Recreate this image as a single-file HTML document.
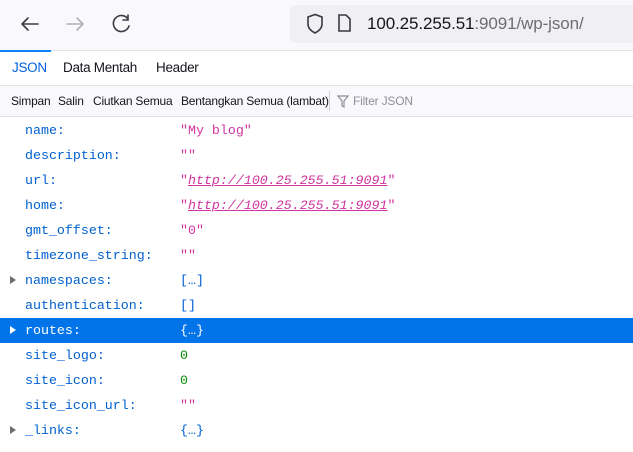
<!DOCTYPE html>
<html><head><style>
body{margin:0;width:633px;height:452px;overflow:hidden;background:#fff;font-family:"Liberation Sans",sans-serif;position:relative}
.top{position:absolute;left:0;top:0;width:633px;height:50px;background:#f9f9fb;border-bottom:1px solid #e0e0e6}
.addr{position:absolute;left:290px;top:5px;width:360px;height:38px;background:#f0f0f4;border-radius:6px}
.url{position:absolute;left:367px;top:14px;font-size:17px;color:#15141a;letter-spacing:-0.1px}
.url span{color:#6d6d72}
.tabs{position:absolute;top:51px;left:0;width:633px;height:34px;border-bottom:1px solid #e0e0e6}
.tab{position:absolute;top:9px;font-size:13.5px;letter-spacing:-0.3px;color:#15141a}
.bar{position:absolute;top:86px;left:0;width:633px;height:30px;background:#f9f9fb;border-bottom:1px solid #e0e0e6;font-size:12px;letter-spacing:-0.2px;color:#15141a}
.bar span{position:absolute;top:8px}
.row{position:absolute;left:0;width:633px;height:25px;font-family:"Liberation Mono",monospace;font-size:13.3px;line-height:25px}
.k{position:absolute;left:25px;color:#0060d0}
.v{position:absolute;left:180px}
.s{color:#d1349e}.n{color:#058b00}.o{color:#0060d0}
.tri{position:absolute;left:10px;top:8px;width:0;height:0;border-left:6px solid #6d6d72;border-top:4.5px solid transparent;border-bottom:4.5px solid transparent}
.sel{background:#0074e8}.sel .k,.sel .v{color:#fff}.sel .tri{border-left-color:#fff}
a{color:#d1349e;font-style:italic;text-decoration:underline}
</style></head><body>
<div class="top">
<svg width="633" height="50" style="position:absolute;left:0;top:0" fill="none" stroke-width="1.6" stroke-linecap="round">
<path d="M22 24h16M22 24l6-6M22 24l6 6" stroke="#3a3944"/>
<path d="M67 24h16M83 24l-6-6M83 24l-6 6" stroke="#b0b0b6"/>
<path d="M128 19a8 8 0 1 0 1 7M128 15v5h-5" stroke="#3a3944"/>
</svg>
<div class="addr"></div>
<svg width="633" height="50" style="position:absolute;left:0;top:0" fill="none" stroke="#3a3944" stroke-width="1.6">
<path d="M308 17l7-2.5 7 2.5v7c0 4-3 7-7 9c-4-2-7-5-7-9z"/>
<path d="M339 15h7l4 4v12h-11z"/>
</svg>
<div class="url">100.25.255.51<span>:9091/wp-json/</span></div>
</div>
<div class="tabs">
<div style="position:absolute;left:0;top:-1px;width:51px;height:2px;background:#0a84ff"></div>
<div class="tab" style="left:12px;color:#0060df">JSON</div>
<div class="tab" style="left:63px">Data Mentah</div>
<div class="tab" style="left:156px">Header</div>
</div>
<div class="bar">
<span style="left:11px">Simpan</span><span style="left:58px">Salin</span><span style="left:93px">Ciutkan Semua</span><span style="left:181px">Bentangkan Semua (lambat)</span>
<div style="position:absolute;left:329px;top:5px;width:1px;height:20px;background:#d0d0d6"></div>
<svg width="12" height="14" style="position:absolute;left:337px;top:9px" fill="none" stroke="#8f8f9d" stroke-width="1.2"><path d="M1 1h10l-4 5v6l-2-1V6z"/></svg>
<span style="left:353px;color:#8f8f9d">Filter JSON</span>
</div>
<div class="row" style="top:118px"><span class="k">name:</span><span class="v s">"My blog"</span></div>
<div class="row" style="top:143px"><span class="k">description:</span><span class="v s">""</span></div>
<div class="row" style="top:168px"><span class="k">url:</span><span class="v s">"<a>http://100.25.255.51:9091</a>"</span></div>
<div class="row" style="top:193px"><span class="k">home:</span><span class="v s">"<a>http://100.25.255.51:9091</a>"</span></div>
<div class="row" style="top:218px"><span class="k">gmt_offset:</span><span class="v s">"0"</span></div>
<div class="row" style="top:243px"><span class="k">timezone_string:</span><span class="v s">""</span></div>
<div class="row" style="top:268px"><div class="tri"></div><span class="k">namespaces:</span><span class="v o">[…]</span></div>
<div class="row" style="top:293px"><span class="k">authentication:</span><span class="v o">[]</span></div>
<div class="row sel" style="top:318px"><div class="tri"></div><span class="k">routes:</span><span class="v o">{…}</span></div>
<div class="row" style="top:343px"><span class="k">site_logo:</span><span class="v n">0</span></div>
<div class="row" style="top:368px"><span class="k">site_icon:</span><span class="v n">0</span></div>
<div class="row" style="top:393px"><span class="k">site_icon_url:</span><span class="v s">""</span></div>
<div class="row" style="top:418px"><div class="tri"></div><span class="k">_links:</span><span class="v o">{…}</span></div>
</body></html>
